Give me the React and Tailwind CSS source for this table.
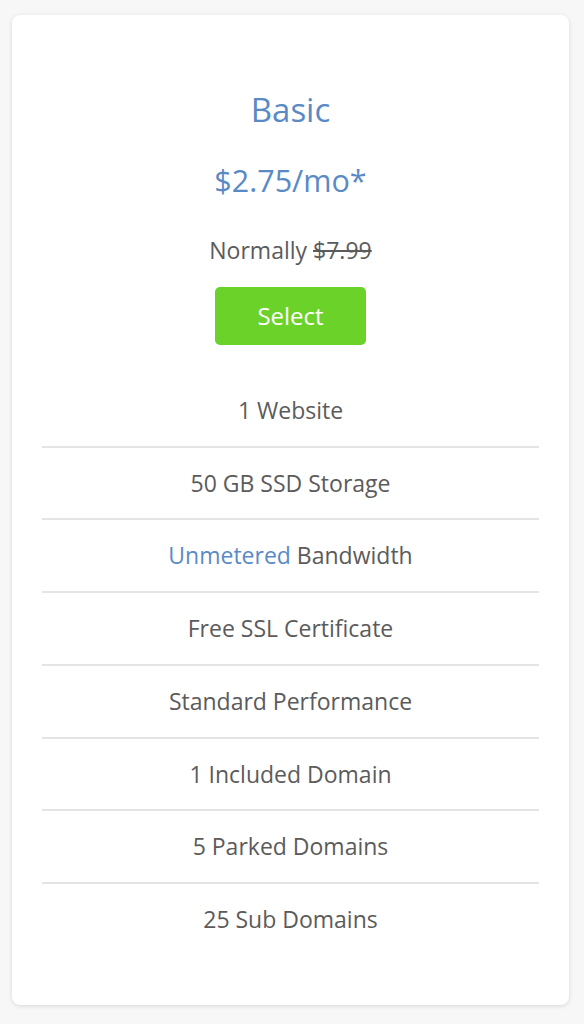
import React from "react";

const features = [
  { text: "1 Website" },
  { text: "50 GB SSD Storage" },
  { highlight: "Unmetered", text: " Bandwidth" },
  { text: "Free SSL Certificate" },
  { text: "Standard Performance" },
  { text: "1 Included Domain" },
  { text: "5 Parked Domains" },
  { text: "25 Sub Domains" },
];

function PlanCard() {
  return (
    <div className="ml-3 w-[557px] rounded-lg bg-white px-[30px] pt-[72px] pb-[50px] shadow-[0_1px_4px_rgba(0,0,0,0.13)]">
      <div className="flex flex-col items-center">
        <h2 className="text-[33px] leading-[45px] font-normal text-[#5a8ac6]">Basic</h2>
        <p className="mt-[28px] text-[30.5px] leading-[41px] text-[#5a8ac6]">$2.75/mo*</p>
        <p className="mt-[34px] text-[23px] leading-[31px] text-[#5b5b5b]">
          Normally <span className="line-through">$7.99</span>
        </p>
        <button
          type="button"
          className="mt-[21px] h-[58px] w-[151px] rounded-[5px] bg-[#6bd22a] text-[24px] text-white"
        >
          Select
        </button>
      </div>

      <ul className="mt-[30px] divide-y-2 divide-[#e4e4e4]">
        {features.map((f, i) => (
          <li key={i} className="py-5 text-center text-[23px] leading-[30.7px] text-[#5b5b5b]">
            {f.highlight && <span className="text-[#5a8ac6]">{f.highlight}</span>}
            {f.text}
          </li>
        ))}
      </ul>
    </div>
  );
}

export default function App() {
  return (
    <div
      className="min-h-screen bg-[#f7f7f7] pt-[15px]"
      style={{ fontFamily: '"Open Sans", "Liberation Sans", sans-serif' }}
    >
      <PlanCard />
    </div>
  );
}
